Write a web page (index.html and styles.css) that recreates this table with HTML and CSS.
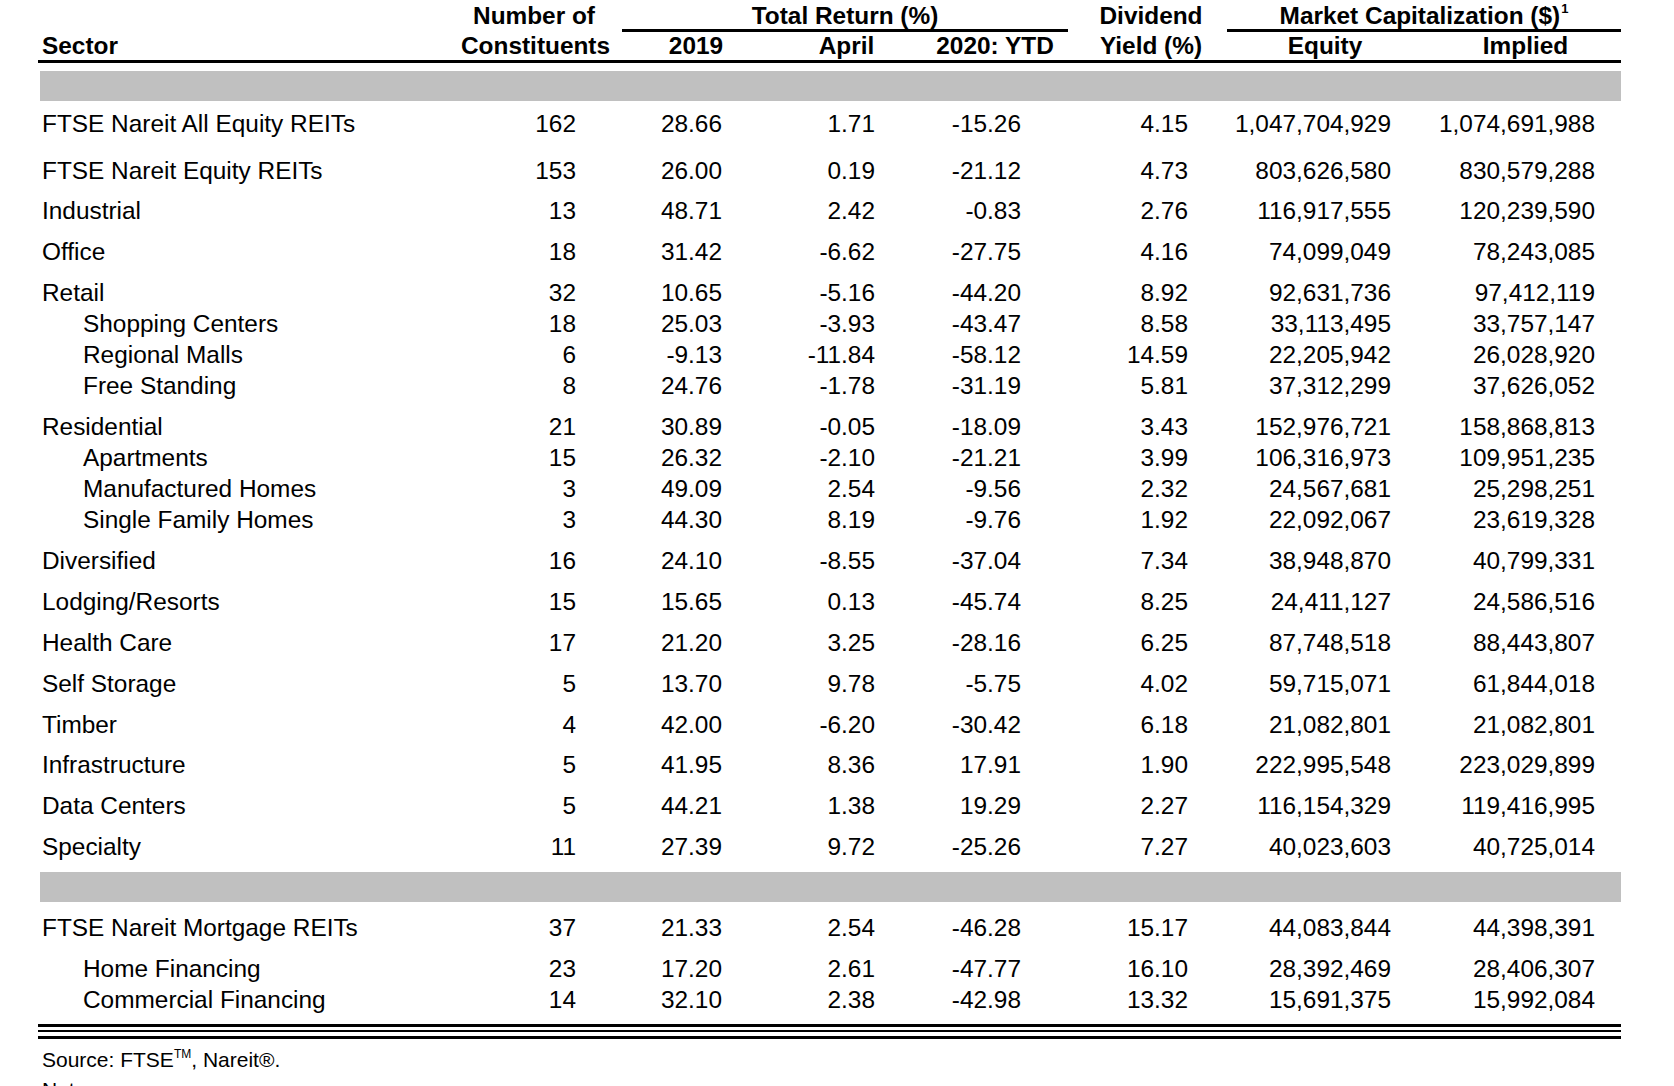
FILE: index.html
```html
<!DOCTYPE html>
<html lang="en">
<head>
<meta charset="utf-8">
<title>FTSE Nareit REIT Index Summary</title>
<link rel="stylesheet" href="styles.css">
</head>
<body>
<div class="sheet">
  <div class="head">
    <div class="hrow1">
      <div class="hc c0"></div>
      <div class="hc">Number of</div>
      <div class="hc span3"><span class="rule rule-tr">Total Return (%)</span></div>
      <div class="hc">Dividend</div>
      <div class="hc span2"><span class="rule rule-mc">Market Capitalization ($)<sup>1</sup></span></div>
    </div>
    <div class="hrow2">
      <div class="hc c0 left">Sector</div>
      <div class="hc">Constituents</div>
      <div class="hc">2019</div>
      <div class="hc">April</div>
      <div class="hc">2020: YTD</div>
      <div class="hc">Yield (%)</div>
      <div class="hc">Equity</div>
      <div class="hc">Implied</div>
    </div>
  </div>

  <div class="band"></div>

  <div class="row first"><div>FTSE Nareit All Equity REITs</div><div>162</div><div>28.66</div><div>1.71</div><div>-15.26</div><div>4.15</div><div>1,047,704,929</div><div>1,074,691,988</div></div>
  <div class="row gap-lg"><div>FTSE Nareit Equity REITs</div><div>153</div><div>26.00</div><div>0.19</div><div>-21.12</div><div>4.73</div><div>803,626,580</div><div>830,579,288</div></div>
  <div class="row gap"><div>Industrial</div><div>13</div><div>48.71</div><div>2.42</div><div>-0.83</div><div>2.76</div><div>116,917,555</div><div>120,239,590</div></div>
  <div class="row gap"><div>Office</div><div>18</div><div>31.42</div><div>-6.62</div><div>-27.75</div><div>4.16</div><div>74,099,049</div><div>78,243,085</div></div>
  <div class="row gap"><div>Retail</div><div>32</div><div>10.65</div><div>-5.16</div><div>-44.20</div><div>8.92</div><div>92,631,736</div><div>97,412,119</div></div>
  <div class="row sub"><div>Shopping Centers</div><div>18</div><div>25.03</div><div>-3.93</div><div>-43.47</div><div>8.58</div><div>33,113,495</div><div>33,757,147</div></div>
  <div class="row sub"><div>Regional Malls</div><div>6</div><div>-9.13</div><div>-11.84</div><div>-58.12</div><div>14.59</div><div>22,205,942</div><div>26,028,920</div></div>
  <div class="row sub"><div>Free Standing</div><div>8</div><div>24.76</div><div>-1.78</div><div>-31.19</div><div>5.81</div><div>37,312,299</div><div>37,626,052</div></div>
  <div class="row gap"><div>Residential</div><div>21</div><div>30.89</div><div>-0.05</div><div>-18.09</div><div>3.43</div><div>152,976,721</div><div>158,868,813</div></div>
  <div class="row sub"><div>Apartments</div><div>15</div><div>26.32</div><div>-2.10</div><div>-21.21</div><div>3.99</div><div>106,316,973</div><div>109,951,235</div></div>
  <div class="row sub"><div>Manufactured Homes</div><div>3</div><div>49.09</div><div>2.54</div><div>-9.56</div><div>2.32</div><div>24,567,681</div><div>25,298,251</div></div>
  <div class="row sub"><div>Single Family Homes</div><div>3</div><div>44.30</div><div>8.19</div><div>-9.76</div><div>1.92</div><div>22,092,067</div><div>23,619,328</div></div>
  <div class="row gap"><div>Diversified</div><div>16</div><div>24.10</div><div>-8.55</div><div>-37.04</div><div>7.34</div><div>38,948,870</div><div>40,799,331</div></div>
  <div class="row gap"><div>Lodging/Resorts</div><div>15</div><div>15.65</div><div>0.13</div><div>-45.74</div><div>8.25</div><div>24,411,127</div><div>24,586,516</div></div>
  <div class="row gap"><div>Health Care</div><div>17</div><div>21.20</div><div>3.25</div><div>-28.16</div><div>6.25</div><div>87,748,518</div><div>88,443,807</div></div>
  <div class="row gap"><div>Self Storage</div><div>5</div><div>13.70</div><div>9.78</div><div>-5.75</div><div>4.02</div><div>59,715,071</div><div>61,844,018</div></div>
  <div class="row gap"><div>Timber</div><div>4</div><div>42.00</div><div>-6.20</div><div>-30.42</div><div>6.18</div><div>21,082,801</div><div>21,082,801</div></div>
  <div class="row gap"><div>Infrastructure</div><div>5</div><div>41.95</div><div>8.36</div><div>17.91</div><div>1.90</div><div>222,995,548</div><div>223,029,899</div></div>
  <div class="row gap"><div>Data Centers</div><div>5</div><div>44.21</div><div>1.38</div><div>19.29</div><div>2.27</div><div>116,154,329</div><div>119,416,995</div></div>
  <div class="row gap"><div>Specialty</div><div>11</div><div>27.39</div><div>9.72</div><div>-25.26</div><div>7.27</div><div>40,023,603</div><div>40,725,014</div></div>

  <div class="band band2"></div>

  <div class="row gap"><div>FTSE Nareit Mortgage REITs</div><div>37</div><div>21.33</div><div>2.54</div><div>-46.28</div><div>15.17</div><div>44,083,844</div><div>44,398,391</div></div>
  <div class="row gap sub"><div>Home Financing</div><div>23</div><div>17.20</div><div>2.61</div><div>-47.77</div><div>16.10</div><div>28,392,469</div><div>28,406,307</div></div>
  <div class="row sub"><div>Commercial Financing</div><div>14</div><div>32.10</div><div>2.38</div><div>-42.98</div><div>13.32</div><div>15,691,375</div><div>15,992,084</div></div>

  <div class="triple">
    <div class="l1"></div>
    <div class="l2"></div>
    <div class="l3"></div>
  </div>

  <p class="source">Source: FTSE<sup>TM</sup>, Nareit®.</p>
  <p class="notes">Notes:</p>
</div>
</body>
</html>
```

FILE: styles.css
```css
html, body {
  margin: 0;
  padding: 0;
  background: #ffffff;
}

body {
  font-family: "Liberation Sans", Arial, sans-serif;
  color: #000000;
  font-size: 24.4px;
  overflow: hidden;
  height: 1086px;
}

.sheet {
  width: 1583px;
  margin-left: 38px;
}

/* ---------- header ---------- */
.head {
  border-bottom: 3px solid #000;
  font-weight: bold;
}

.hrow1,
.hrow2,
.row {
  display: grid;
  grid-template-columns: 423px 146px 178px 123px 174px 138px 210px 191px;
}

.hrow1 .hc {
  height: 32px;
  line-height: 27px;
  padding-top: 2px;
  box-sizing: border-box;
  text-align: center;
  white-space: nowrap;
}

.hrow1 .span3 { grid-column: span 3; }
.hrow1 .span2 { grid-column: span 2; }

.rule {
  display: block;
  border-bottom: 3px solid #000;
  height: 27px;
}

.rule-tr { margin: 0 14px 0 15px; }
.rule-mc { margin: 0 0 0 7px; }

.rule sup {
  font-size: 13px;
  line-height: 0;
  vertical-align: 11px;
  margin-left: 1px;
}

.hrow2 .hc {
  line-height: 27px;
  padding-bottom: 1px;
  text-align: center;
  white-space: nowrap;
}

.hrow2 .left {
  text-align: left;
  padding-left: 4px;
}

/* ---------- grey bands ---------- */
.band {
  height: 30px;
  margin: 8px 0 0 2px;
  background: #c0c0c0;
}

.band2 {
  margin-top: 10px;
}

/* ---------- data rows ---------- */
.row {
  line-height: 31px;
  white-space: nowrap;
}

.row > div { text-align: right; }
.row > div:nth-child(1) { text-align: left; padding-left: 4px; }
.row > div:nth-child(2) { padding-right: 31px; }
.row > div:nth-child(3) { padding-right: 63px; }
.row > div:nth-child(4) { padding-right: 33px; }
.row > div:nth-child(5) { padding-right: 61px; }
.row > div:nth-child(6) { padding-right: 32px; }
.row > div:nth-child(7) { padding-right: 39px; }
.row > div:nth-child(8) { padding-right: 26px; }

.row.first { padding-top: 7px; }
.row.gap-lg { padding-top: 15.5px; }
.row.gap { padding-top: 9.9px; }
.row.sub > div:nth-child(1) { padding-left: 45px; }

/* ---------- closing rules ---------- */
.triple {
  margin-top: 9.5px;
}

.triple .l1 { height: 3px; background: #000; }
.triple .l2 { height: 2px; background: #000; margin-top: 3px; }
.triple .l3 { height: 3px; background: #000; margin-top: 4px; }

.source,
.notes {
  margin: 0;
  font-size: 21px;
  padding-left: 4px;
  line-height: 30px;
}

.source {
  margin-top: 6px;
}

.source sup {
  font-size: 12px;
  line-height: 0;
  vertical-align: 9px;
}
```
